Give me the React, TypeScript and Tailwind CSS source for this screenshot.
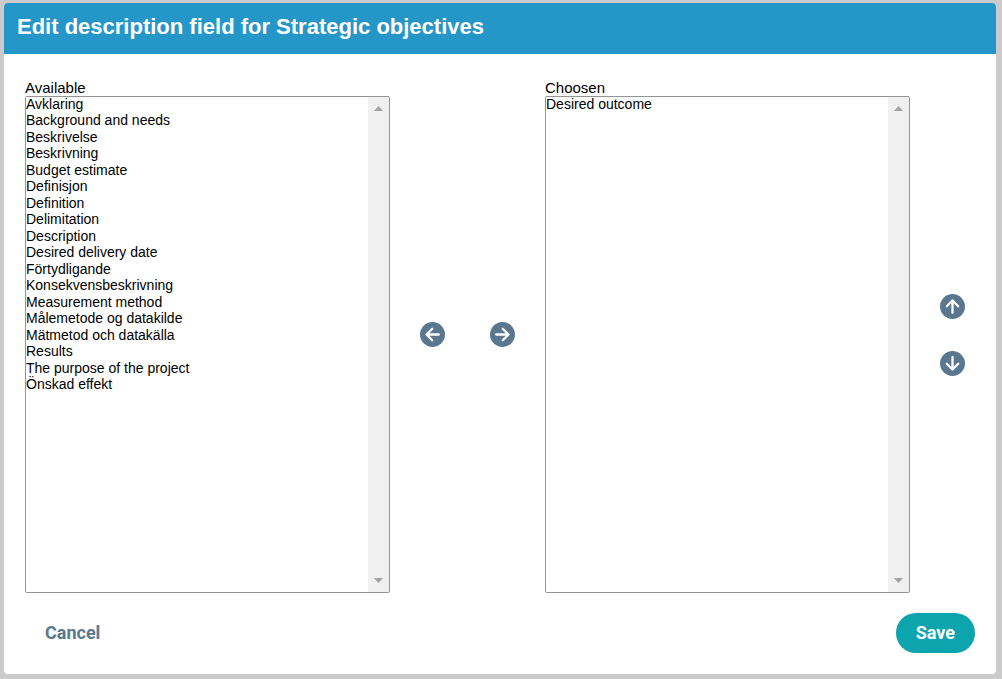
import { useState } from "react";

const initialAvailable = [
  "Avklaring",
  "Background and needs",
  "Beskrivelse",
  "Beskrivning",
  "Budget estimate",
  "Definisjon",
  "Definition",
  "Delimitation",
  "Description",
  "Desired delivery date",
  "Förtydligande",
  "Konsekvensbeskrivning",
  "Measurement method",
  "Målemetode og datakilde",
  "Mätmetod och datakälla",
  "Results",
  "The purpose of the project",
  "Önskad effekt",
];

type ArrowButtonProps = {
  label: string;
  rotation: string;
  onClick: () => void;
};

function ArrowButton({ label, rotation, onClick }: ArrowButtonProps) {
  return (
    <button type="button" aria-label={label} onClick={onClick} className="size-[25px] shrink-0 cursor-pointer rounded-full">
      <svg viewBox="0 0 25 25" className={`size-full ${rotation}`} aria-hidden="true">
        <circle cx="12.5" cy="12.5" r="12.5" fill="#5a7790" />
        <path
          d="M12.2 6.8 6.5 12.5l5.7 5.7M6.8 12.5h12"
          fill="none"
          stroke="#fff"
          strokeWidth="2.3"
          strokeLinecap="round"
          strokeLinejoin="round"
        />
      </svg>
    </button>
  );
}

type ListProps = {
  id: string;
  label: string;
  items: string[];
  selected: string[];
  onSelect: (values: string[]) => void;
};

function ListBox({ id, label, items, selected, onSelect }: ListProps) {
  return (
    <div className="flex min-w-0 flex-1 flex-col">
      <label htmlFor={id} className="text-[15px] leading-4">
        {label}
      </label>
      <div className="flex min-h-80 flex-1 overflow-hidden rounded-xs border border-[#949494] bg-white">
        <select
          id={id}
          multiple
          value={selected}
          onChange={(e) => onSelect(Array.from(e.target.selectedOptions, (o) => o.value))}
          className="-mt-px min-w-0 flex-1 bg-white text-sm outline-none [scrollbar-width:none]"
        >
          {items.map((item) => (
            <option key={item} value={item} className="min-h-0 p-0 even:pb-px">
              {item}
            </option>
          ))}
        </select>
        <div aria-hidden="true" className="flex w-[21px] flex-col items-center justify-between bg-[#f0f0f0] py-[9px]">
          <svg viewBox="0 0 9 5" className="h-[5px] w-[9px]">
            <path d="M0 5 4.5 0 9 5z" fill="#a3a3a3" />
          </svg>
          <svg viewBox="0 0 9 5" className="h-[5px] w-[9px]">
            <path d="M0 0 4.5 5 9 0z" fill="#a3a3a3" />
          </svg>
        </div>
      </div>
    </div>
  );
}

export default function App() {
  const [available, setAvailable] = useState(initialAvailable);
  const [chosen, setChosen] = useState(["Desired outcome"]);
  const [markedAvailable, setMarkedAvailable] = useState<string[]>([]);
  const [markedChosen, setMarkedChosen] = useState<string[]>([]);

  const add = () => {
    setChosen([...chosen, ...markedAvailable]);
    setAvailable(available.filter((i) => !markedAvailable.includes(i)));
    setMarkedAvailable([]);
  };

  const remove = () => {
    setAvailable([...available, ...markedChosen].sort((a, b) => a.localeCompare(b, "sv")));
    setChosen(chosen.filter((i) => !markedChosen.includes(i)));
    setMarkedChosen([]);
  };

  const move = (step: number) => {
    const from = chosen.indexOf(markedChosen[0]);
    const to = from + step;
    if (from < 0 || to < 0 || to >= chosen.length) return;
    const next = [...chosen];
    [next[from], next[to]] = [next[to], next[from]];
    setChosen(next);
  };

  return (
    <div className="flex min-h-screen flex-col bg-[#cbcbcb] pt-[3px] pr-[6px] pb-[5px] pl-1 font-['Liberation_Sans',Arial,sans-serif] text-black">
      <main className="flex flex-1 flex-col overflow-hidden rounded bg-white">
        <header className="bg-[#2596c8] px-[13px] pt-2 pb-[11px]">
          <h1 className="text-[22px] leading-8 font-bold text-white">Edit description field for Strategic objectives</h1>
        </header>
        <form className="flex flex-1 flex-col gap-5 px-[21px] pt-[26px] pb-[21px]" onSubmit={(e) => e.preventDefault()}>
          <div className="flex flex-1">
            <ListBox id="available" label="Available" items={available} selected={markedAvailable} onSelect={setMarkedAvailable} />
            <div className="flex items-center gap-[45px] px-[30px] pb-1">
              <ArrowButton label="Remove from chosen" rotation="rotate-0" onClick={remove} />
              <ArrowButton label="Add to chosen" rotation="rotate-180" onClick={add} />
            </div>
            <ListBox id="chosen" label="Choosen" items={chosen} selected={markedChosen} onSelect={setMarkedChosen} />
            <div className="flex flex-col justify-center gap-8 pr-[10px] pb-1 pl-[30px]">
              <ArrowButton label="Move up" rotation="rotate-90" onClick={() => move(-1)} />
              <ArrowButton label="Move down" rotation="-rotate-90" onClick={() => move(1)} />
            </div>
          </div>
          <div className="flex justify-between font-[Roboto,sans-serif] text-lg font-bold">
            <button type="button" className="h-10 cursor-pointer rounded-full px-5 text-[#5a7790]">
              Cancel
            </button>
            <button type="submit" className="h-10 cursor-pointer rounded-full bg-[#0ca5ad] px-5 text-white">
              Save
            </button>
          </div>
        </form>
      </main>
    </div>
  );
}
